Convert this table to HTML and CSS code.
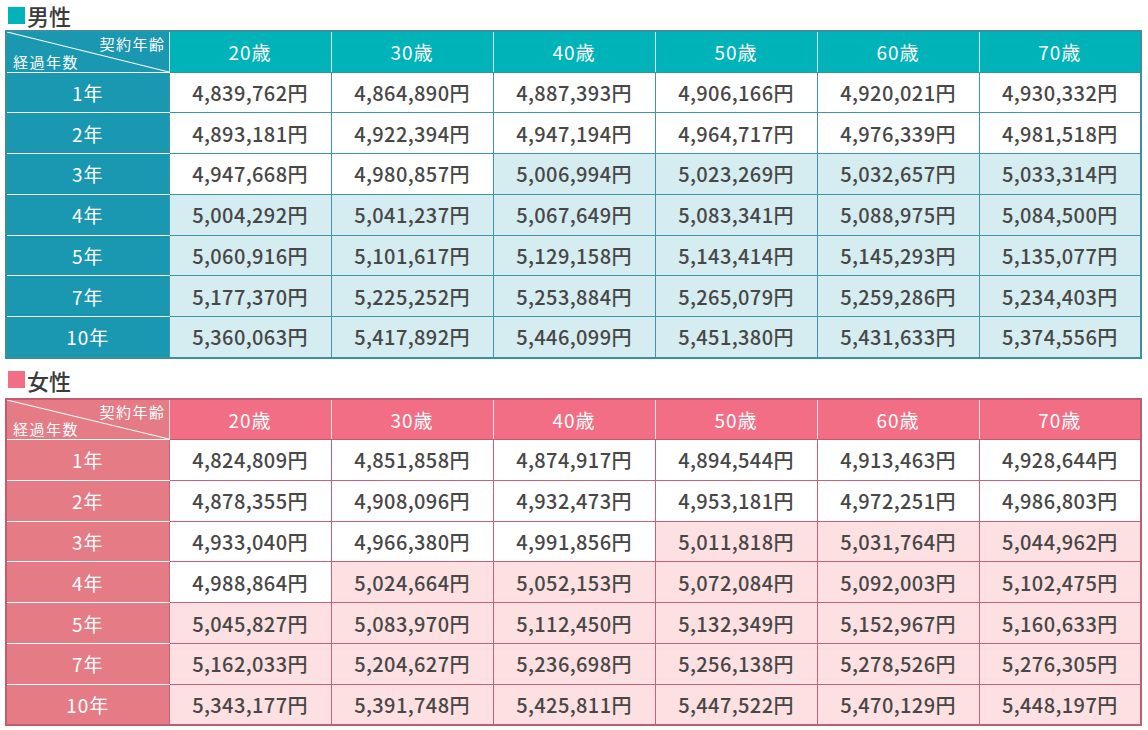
FILE: index.html
```html
<!DOCTYPE html>
<html lang="ja">
<head>
<meta charset="utf-8">
<link rel="stylesheet" href="styles.css">
</head>
<body>
<section class="block male">
  <h2 class="title"><span class="sq"></span>男性</h2>
  <table class="tbl">
    <thead>
      <tr>
        <th class="corner"><span class="c-top">契約年齢</span><span class="c-bot">経過年数</span></th>
        <th>20歳</th><th>30歳</th><th>40歳</th><th>50歳</th><th>60歳</th><th>70歳</th>
      </tr>
    </thead>
    <tbody>
      <tr><th>1年</th><td>4,839,762円</td><td>4,864,890円</td><td>4,887,393円</td><td>4,906,166円</td><td>4,920,021円</td><td>4,930,332円</td></tr>
      <tr><th>2年</th><td>4,893,181円</td><td>4,922,394円</td><td>4,947,194円</td><td>4,964,717円</td><td>4,976,339円</td><td>4,981,518円</td></tr>
      <tr><th>3年</th><td>4,947,668円</td><td>4,980,857円</td><td class="hl">5,006,994円</td><td class="hl">5,023,269円</td><td class="hl">5,032,657円</td><td class="hl">5,033,314円</td></tr>
      <tr class="hl"><th>4年</th><td>5,004,292円</td><td>5,041,237円</td><td>5,067,649円</td><td>5,083,341円</td><td>5,088,975円</td><td>5,084,500円</td></tr>
      <tr class="hl"><th>5年</th><td>5,060,916円</td><td>5,101,617円</td><td>5,129,158円</td><td>5,143,414円</td><td>5,145,293円</td><td>5,135,077円</td></tr>
      <tr class="hl"><th>7年</th><td>5,177,370円</td><td>5,225,252円</td><td>5,253,884円</td><td>5,265,079円</td><td>5,259,286円</td><td>5,234,403円</td></tr>
      <tr class="hl"><th>10年</th><td>5,360,063円</td><td>5,417,892円</td><td>5,446,099円</td><td>5,451,380円</td><td>5,431,633円</td><td>5,374,556円</td></tr>
    </tbody>
  </table>
</section>
<section class="block female">
  <h2 class="title"><span class="sq"></span>女性</h2>
  <table class="tbl">
    <thead>
      <tr>
        <th class="corner"><span class="c-top">契約年齢</span><span class="c-bot">経過年数</span></th>
        <th>20歳</th><th>30歳</th><th>40歳</th><th>50歳</th><th>60歳</th><th>70歳</th>
      </tr>
    </thead>
    <tbody>
      <tr><th>1年</th><td>4,824,809円</td><td>4,851,858円</td><td>4,874,917円</td><td>4,894,544円</td><td>4,913,463円</td><td>4,928,644円</td></tr>
      <tr><th>2年</th><td>4,878,355円</td><td>4,908,096円</td><td>4,932,473円</td><td>4,953,181円</td><td>4,972,251円</td><td>4,986,803円</td></tr>
      <tr><th>3年</th><td>4,933,040円</td><td>4,966,380円</td><td>4,991,856円</td><td class="hl">5,011,818円</td><td class="hl">5,031,764円</td><td class="hl">5,044,962円</td></tr>
      <tr><th>4年</th><td>4,988,864円</td><td class="hl">5,024,664円</td><td class="hl">5,052,153円</td><td class="hl">5,072,084円</td><td class="hl">5,092,003円</td><td class="hl">5,102,475円</td></tr>
      <tr class="hl"><th>5年</th><td>5,045,827円</td><td>5,083,970円</td><td>5,112,450円</td><td>5,132,349円</td><td>5,152,967円</td><td>5,160,633円</td></tr>
      <tr class="hl"><th>7年</th><td>5,162,033円</td><td>5,204,627円</td><td>5,236,698円</td><td>5,256,138円</td><td>5,278,526円</td><td>5,276,305円</td></tr>
      <tr class="hl"><th>10年</th><td>5,343,177円</td><td>5,391,748円</td><td>5,425,811円</td><td>5,447,522円</td><td>5,470,129円</td><td>5,448,197円</td></tr>
    </tbody>
  </table>
</section>
</body>
</html>
```

FILE: styles.css
```css
* { box-sizing: border-box; }
html, body { margin: 0; padding: 0; background: #fff; }
body {
  font-family: "Noto Sans CJK JP", "Noto Sans", sans-serif;
  color: #444;
  width: 1148px;
}
.block { padding-left: 5px; }
.male { --head: #00b3b8; --side: #1a98b2; --line: #3e97a8; --outer: #3a8fa0; --hl: #d5ecf0; }
.female { --head: #f26e84; --side: #e57b85; --line: #c9617a; --outer: #c25a70; --hl: #fde0e1; }

.title {
  margin: 0;
  height: 30px;
  display: flex;
  align-items: center;
  font-size: 22px;
  font-weight: 500;
  color: #3b3b3b;
  line-height: 1;
  padding-left: 3px;
}
.female .title { height: 39px; padding-top: 3px; }
.title .sq {
  width: 17px; height: 17px;
  background: var(--head);
  margin-right: 2px;
}
.tbl {
  border-collapse: collapse;
  table-layout: fixed;
  width: 1137px;
  border: 2px solid var(--outer);
}
.tbl th, .tbl td {
  border: 1px solid var(--line);
  text-align: center;
  padding: 0;
  font-size: 19px;
  letter-spacing: 1px;
}
.tbl thead th {
  background: var(--head);
  color: #fff;
  font-weight: 400;
  height: 41px;
  border-color: var(--outer);
  border-left-color: rgba(255,255,255,0.8);
  border-right-color: rgba(255,255,255,0.8);
}
.tbl thead th:first-child { width: 163px; border-left-color: var(--outer); }
.tbl thead th:last-child { border-right-color: var(--outer); }
.tbl .corner {
  position: relative;
  background: linear-gradient(to top right, var(--side) calc(50% - 1px), #fff 50%, var(--side) calc(50% + 1px));
  font-size: 15px;
  letter-spacing: 1.5px;
  border-bottom-color: #fff;
}
.c-top { position: absolute; right: 3px; top: 4px; line-height: 1; }
.c-bot { position: absolute; left: 6px; bottom: 3px; line-height: 1; }
.tbl tbody tr { height: 40.8px; }
.tbl tbody th {
  background: var(--side);
  color: #fff;
  font-weight: 400;
  border-left-color: var(--outer);
  border-top-color: #fff;
  border-bottom-color: #fff;
}
.tbl tbody tr:last-child th { border-bottom-color: var(--outer); }
.tbl td {
  font-weight: 500;
  color: #474747;
  font-size: 20px;
  letter-spacing: 0.4px;
  background: #fff;
}
.tbl tr.hl td, .tbl td.hl { background: var(--hl); }
```
